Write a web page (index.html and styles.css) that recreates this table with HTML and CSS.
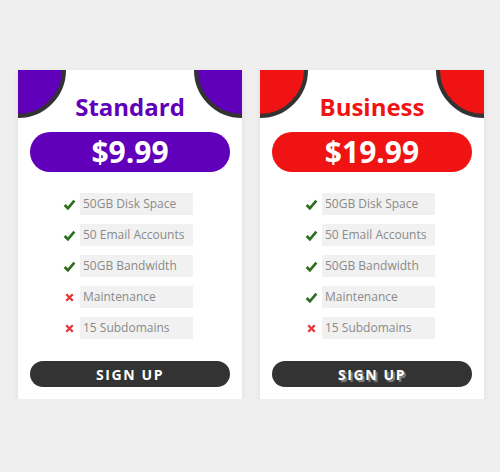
FILE: index.html
```html
<!DOCTYPE html>
<html>
<head>
<meta charset="utf-8">
<link rel="stylesheet" href="styles.css">
</head>
<body>
<div class="plans">
  <div class="card standard">
    <span class="corner left"></span>
    <span class="corner right"></span>
    <h2 class="title">Standard</h2>
    <div class="price">$9.99</div>
    <ul class="features">
      <li><svg class="ico yes" viewBox="0 0 12 12"><path d="M1.5 6.5 L4.5 9.5 L10.5 2.5"/></svg><span class="label">50GB Disk Space</span></li>
      <li><svg class="ico yes" viewBox="0 0 12 12"><path d="M1.5 6.5 L4.5 9.5 L10.5 2.5"/></svg><span class="label">50 Email Accounts</span></li>
      <li><svg class="ico yes" viewBox="0 0 12 12"><path d="M1.5 6.5 L4.5 9.5 L10.5 2.5"/></svg><span class="label">50GB Bandwidth</span></li>
      <li><svg class="ico no" viewBox="0 0 12 12"><path d="M3 3 L9 9 M9 3 L3 9"/></svg><span class="label">Maintenance</span></li>
      <li><svg class="ico no" viewBox="0 0 12 12"><path d="M3 3 L9 9 M9 3 L3 9"/></svg><span class="label">15 Subdomains</span></li>
    </ul>
    <button class="signup">SIGN UP</button>
  </div>
  <div class="card business">
    <span class="corner left"></span>
    <span class="corner right"></span>
    <h2 class="title">Business</h2>
    <div class="price">$19.99</div>
    <ul class="features">
      <li><svg class="ico yes" viewBox="0 0 12 12"><path d="M1.5 6.5 L4.5 9.5 L10.5 2.5"/></svg><span class="label">50GB Disk Space</span></li>
      <li><svg class="ico yes" viewBox="0 0 12 12"><path d="M1.5 6.5 L4.5 9.5 L10.5 2.5"/></svg><span class="label">50 Email Accounts</span></li>
      <li><svg class="ico yes" viewBox="0 0 12 12"><path d="M1.5 6.5 L4.5 9.5 L10.5 2.5"/></svg><span class="label">50GB Bandwidth</span></li>
      <li><svg class="ico yes" viewBox="0 0 12 12"><path d="M1.5 6.5 L4.5 9.5 L10.5 2.5"/></svg><span class="label">Maintenance</span></li>
      <li><svg class="ico no" viewBox="0 0 12 12"><path d="M3 3 L9 9 M9 3 L3 9"/></svg><span class="label">15 Subdomains</span></li>
    </ul>
    <button class="signup shadowed">SIGN UP</button>
  </div>
</div>
</body>
</html>
```
FILE: styles.css
```css
html, body {
  margin: 0;
  padding: 0;
  background: #efefef;
  font-family: "Open Sans", "DejaVu Sans", sans-serif;
}
.plans {
  display: flex;
  gap: 18px;
  padding: 70px 0 0 18px;
}
.card {
  position: relative;
  overflow: hidden;
  width: 224px;
  height: 329px;
  box-sizing: border-box;
  background: #fff;
  box-shadow: 0 2px 6px rgba(0, 0, 0, 0.08);
  padding: 22px 12px 12px;
  display: flex;
  flex-direction: column;
  align-items: center;
}
.corner {
  position: absolute;
  top: -48px;
  width: 96px;
  height: 96px;
  box-sizing: border-box;
  border: 4px solid #333;
  border-radius: 50%;
}
.corner.left { left: -48px; }
.corner.right { right: -48px; }
.standard .corner { background: #6000ba; }
.business .corner { background: #f01313; }
.title {
  position: relative;
  margin: 0;
  font-size: 24px;
  line-height: 30px;
  font-weight: 700;
}
.standard .title { color: #6000ba; }
.business .title { color: #f01313; }
.price {
  margin-top: 10px;
  width: 100%;
  height: 40px;
  border-radius: 20px;
  color: #fff;
  font-size: 30px;
  font-weight: 700;
  line-height: 40px;
  text-align: center;
}
.standard .price { background: #6000ba; }
.business .price { background: #f01313; }
.features {
  list-style: none;
  margin: 21px 4px 0 0;
  padding: 0;
  display: flex;
  flex-direction: column;
  gap: 9px;
}
.features li {
  display: flex;
  align-items: center;
  gap: 4px;
  height: 22px;
}
.ico {
  width: 13px;
  height: 13px;
  fill: none;
  stroke-width: 2.5;
  stroke-linecap: butt;
}
.ico.yes { stroke: #2d6f1f; }
.ico.no { stroke: #e8363a; stroke-width: 2.2; }
.label {
  display: block;
  width: 113px;
  height: 22px;
  box-sizing: border-box;
  background: #f1f1f1;
  padding-left: 3px;
  color: #8a8a8a;
  font-size: 12px;
  line-height: 22px;
  white-space: nowrap;
}
.signup {
  margin-top: 22px;
  width: 100%;
  height: 26px;
  border: none;
  border-radius: 13px;
  background: #333;
  color: #fff;
  font-family: inherit;
  font-size: 14px;
  font-weight: 700;
  letter-spacing: 1.6px;
  padding: 0;
}
.signup.shadowed {
  text-shadow: 2px 2px 1px #888;
}
```
